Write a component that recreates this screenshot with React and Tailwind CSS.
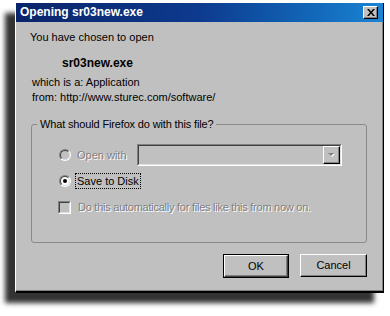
import React from 'react';

function Radio({ checked, disabled }) {
  return (
    <span className="inline-flex w-[12px] h-[12px] shrink-0 rounded-full border border-t-[#808080] border-l-[#808080] border-b-white border-r-white">
      <span
        className={`flex items-center justify-center w-full h-full rounded-full border border-t-[#404040] border-l-[#404040] border-b-[#dfdfdf] border-r-[#dfdfdf] ${
          disabled ? 'bg-[#c0c0c0]' : 'bg-white'
        }`}
      >
        {checked && <span className="w-[4px] h-[4px] rounded-full bg-black" />}
      </span>
    </span>
  );
}

function Bevel({ children, className = '' }) {
  // raised win classic bevel
  return (
    <span
      className={`flex items-center justify-center w-full h-full border border-t-white border-l-white border-r-black border-b-black shadow-[inset_-1px_-1px_0_#808080] ${className}`}
    >
      {children}
    </span>
  );
}

export default function App() {
  return (
    <div className="w-[390px] h-[316px] overflow-hidden bg-white pt-[3px] pl-[15px] font-['Liberation_Sans',Arial,sans-serif] text-[11px] leading-[15px] text-black">
      <div className="w-[369px] h-[290px] flex flex-col bg-[#c0c0c0] border-l border-l-white border-r border-r-black border-b-2 border-b-black shadow-[inset_-1px_-1px_0_#808080,-10px_10px_5px_#333]">
        {/* Title bar */}
        <div className="h-[19px] flex items-center justify-between pl-[4px] pr-[5px] bg-linear-to-r from-[#0a246a] via-[#0d3a8e] to-[#1a84d4]">
          <span className="text-white font-bold text-[12px] leading-[19px]">Opening sr03new.exe</span>
          <span className="w-[15px] h-[13px] bg-[#c0c0c0]">
            <Bevel>
              <svg width="8" height="7" viewBox="0 0 8 7">
                <path d="M0 0h2l2 2.5L6 0h2L5 3.5 8 7H6L4 4.5 2 7H0l3-3.5z" fill="#000" />
              </svg>
            </Bevel>
          </span>
        </div>

        {/* Info */}
        <div className="mt-[8px] pl-[14px]">You have chosen to open</div>
        <div className="mt-[11px] pl-[46px] font-bold text-[12px]">sr03new.exe</div>
        <div className="mt-[4px] pl-[16px]">which is a: Application</div>
        <div className="pl-[16px]">from: http://www.sturec.com/software/</div>

        {/* Group */}
        <fieldset className="mt-[12px] ml-[15px] mr-[16px] border border-[#8a8a8a] rounded-[3px] p-0 pb-[27px]">
          <legend className="ml-[5px] px-[3px] leading-[15px] tracking-[-0.15px]">What should Firefox do with this file?</legend>

          <div className="mt-[12px] h-[22px] flex items-center pl-[27px]">
            <Radio disabled />
            <span className="ml-[6px] w-[60px] text-[#808080] [text-shadow:1px_1px_0_#fff]">Open with</span>
            <div className="w-[205px] h-[22px] flex justify-end border border-t-[#808080] border-l-[#808080] border-b-white border-r-white">
              <div className="flex-1 flex justify-end border border-t-[#404040] border-l-[#404040] border-b-[#dfdfdf] border-r-[#dfdfdf] bg-[#c0c0c0]">
                <span className="w-[17px] h-full">
                  <Bevel>
                    <svg width="9" height="6" viewBox="0 0 9 6">
                      <path d="M2 2h6L5 5z" fill="#fff" />
                      <path d="M1 1h6L4 4z" fill="#808080" />
                    </svg>
                  </Bevel>
                </span>
              </div>
            </div>
          </div>

          <div className="mt-[7px] h-[16px] flex items-center pl-[27px]">
            <Radio checked />
            <span className="ml-[5px] px-[1px] outline outline-1 outline-dotted outline-black leading-[14px]">Save to Disk</span>
          </div>

          <div className="mt-[10px] h-[16px] flex items-center pl-[26px]">
            <span className="w-[13px] h-[13px] shrink-0 border border-t-[#808080] border-l-[#808080] border-b-white border-r-white">
              <span className="block w-full h-full border border-t-[#404040] border-l-[#404040] border-b-[#dfdfdf] border-r-[#dfdfdf] bg-[#c0c0c0]" />
            </span>
            <span className="ml-[7px] tracking-[-0.25px] text-[#808080] [text-shadow:1px_1px_0_#fff]">
              Do this automatically for files like this from now on.
            </span>
          </div>
        </fieldset>

        {/* Buttons */}
        <div className="mt-[11px] flex justify-end gap-[11px] pr-[16px]">
          <button className="w-[66px] h-[24px] p-0 border border-black bg-[#c0c0c0]">
            <span className="flex items-center justify-center w-full h-full border border-t-white border-l-white border-r-[#404040] border-b-[#404040] shadow-[inset_-1px_-1px_0_#808080]">
              OK
            </span>
          </button>
          <button className="w-[67px] h-[23px] p-0 bg-[#c0c0c0]">
            <Bevel>Cancel</Bevel>
          </button>
        </div>
      </div>
    </div>
  );
}
